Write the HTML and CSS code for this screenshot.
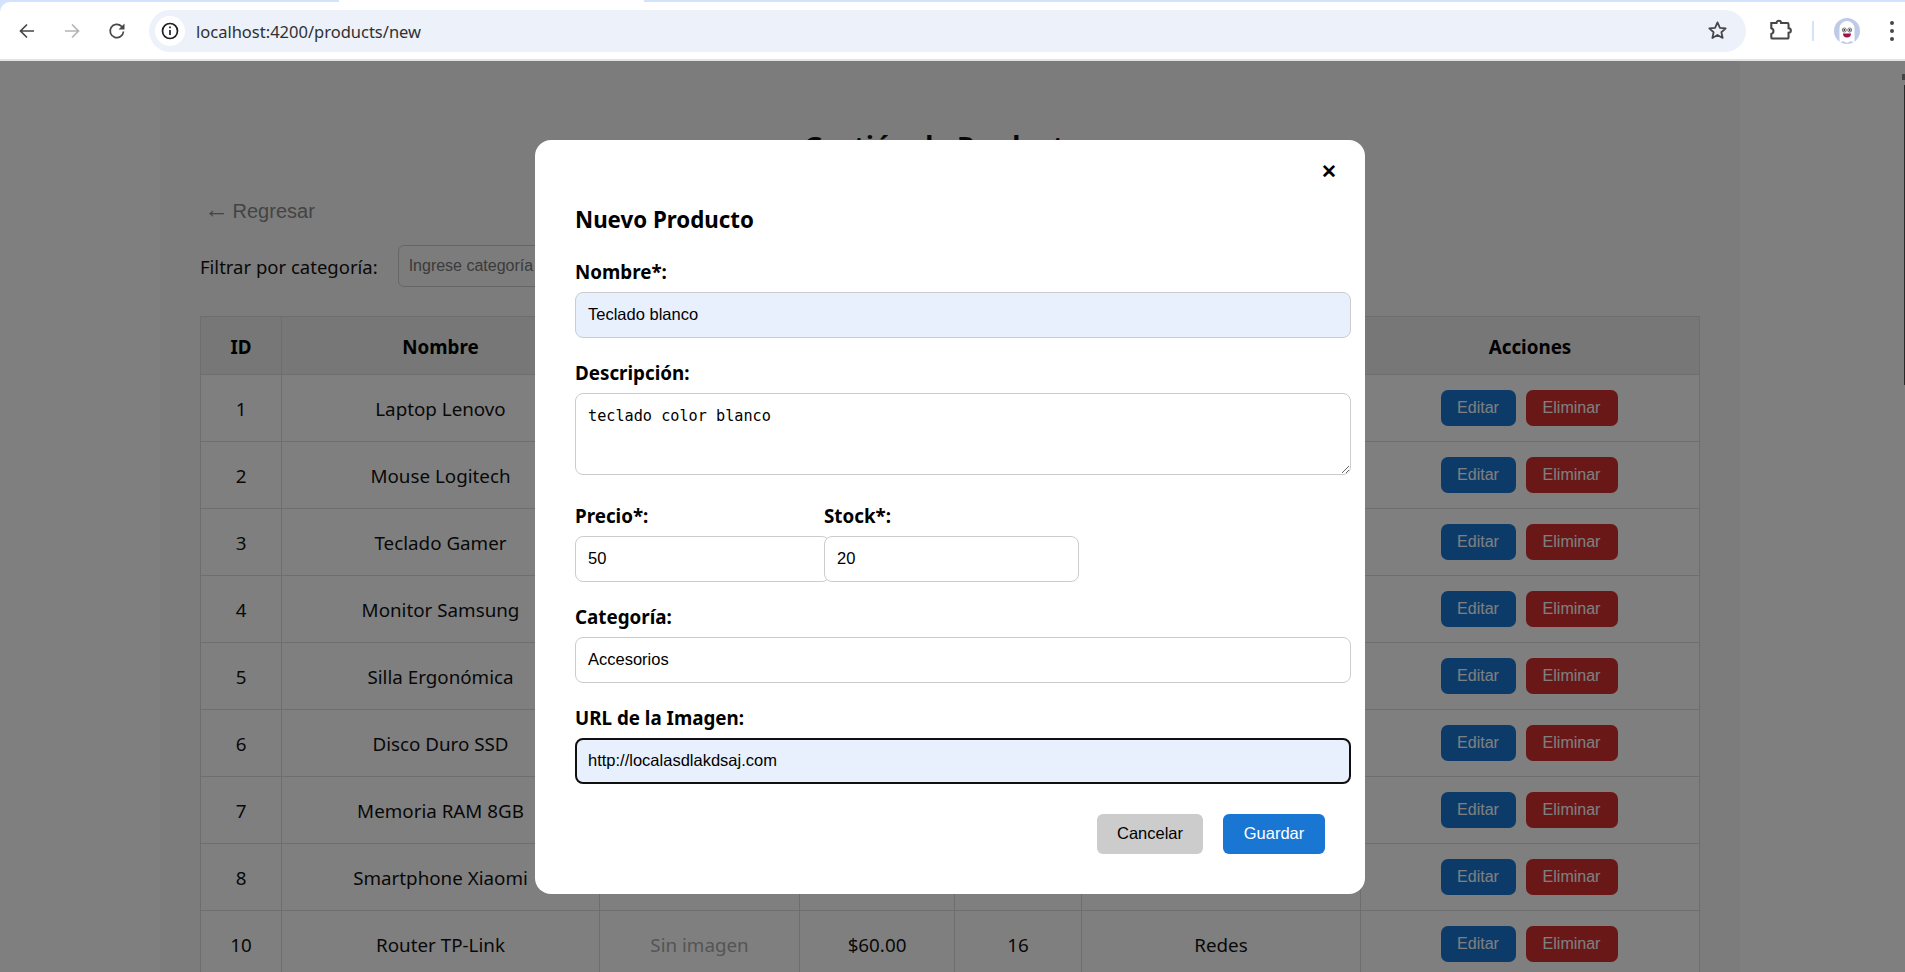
FILE: index.html
```html
<!DOCTYPE html>
<html lang="es">
<head>
    <meta charset="UTF-8">
    <meta name="viewport" content="width=device-width, initial-scale=1.0">
    <title>Nuevo Producto</title>
    <link rel="stylesheet" href="styles.css">
</head>
<body>

<header class="browser">
    <div class="tab-strip"><span class="tab-gap"></span></div>
    <div class="toolbar">
        <svg class="tool-icon back" viewBox="0 0 20 20"><path d="M17 10H4M10 3.500 3.500 10l6.500 6.500"/></svg>
        <svg class="tool-icon forward" viewBox="0 0 20 20"><path d="M3 10h13M10 3.500l6.500 6.500-6.500 6.500"/></svg>
        <svg class="tool-icon reload" viewBox="0 0 20 20"><path d="M16.500 10.500a6.700 6.700 0 1 1-1.900-5.200L16.500 7"/><path class="solid" d="M17.500 2.500v6h-6z"/></svg>
        <div class="address">
            <span class="site-info">
                <svg viewBox="0 0 20 20"><circle cx="10" cy="10" r="7.500"/><path d="M10 9v5"/><path d="M10 5.500v1.800"/></svg>
            </span>
            <span class="url">localhost:4200/products/new</span>
            <svg class="star" viewBox="0 0 20 20"><path d="M10 2.300l2.300 5.100 5.500.6-4.100 3.700 1.200 5.400L10 14.300l-4.900 2.800 1.200-5.400L2.200 8l5.500-.6z"/></svg>
        </div>
        <svg class="puzzle" viewBox="0 0 20 20"><path d="M2 3.500h4.500a2 2 0 0 1 4 0H16a1 1 0 0 1 1 1V8a2 2 0 0 1 0 4v4a1 1 0 0 1-1 1H3a1 1 0 0 1-1-1v-3a2.600 2.600 0 0 0 0-5z"/></svg>
        <span class="toolbar-sep"></span>
        <svg class="avatar" viewBox="0 0 26 26">
            <circle cx="13" cy="13" r="13" fill="#bfcbe6"/>
            <path d="M5.500 25V10.500a7.500 7.500 0 0 1 15 0V25l-3.500-2-4 2-4-2z" fill="#fff"/>
            <circle cx="10.300" cy="12" r="2" fill="#fff" stroke="#555" stroke-width=".8"/>
            <circle cx="15.700" cy="12" r="2" fill="#fff" stroke="#555" stroke-width=".8"/>
            <circle cx="10.300" cy="12" r=".9" fill="#333"/>
            <circle cx="15.700" cy="12" r=".9" fill="#333"/>
            <path d="M9 15.500h8a4 4 0 0 1-8 0z" fill="#a3124f"/>
        </svg>
        <span class="dots"><i></i><i></i><i></i></span>
    </div>
</header>

<div class="viewport">
    <main class="container">
        <h1>Gestión de Productos</h1>
        <a class="back-link" href="#"><span class="back-arrow">←</span> Regresar</a>
        <div class="filter">
            <label for="filterCategory">Filtrar por categoría:</label>
            <input type="text" id="filterCategory" placeholder="Ingrese categoría">
        </div>

        <table class="products">
            <colgroup>
                <col class="col-id"><col class="col-name"><col class="col-image"><col class="col-price">
                <col class="col-stock"><col class="col-category"><col class="col-actions">
            </colgroup>
            <thead>
                <tr><th>ID</th><th>Nombre</th><th>Imagen</th><th>Precio</th><th>Stock</th><th>Categoría</th><th>Acciones</th></tr>
            </thead>
            <tbody>
                <tr><td>1</td><td>Laptop Lenovo</td><td></td><td></td><td></td><td></td><td class="actions"><button class="btn-edit">Editar</button><button class="btn-delete">Eliminar</button></td></tr>
                <tr><td>2</td><td>Mouse Logitech</td><td></td><td></td><td></td><td></td><td class="actions"><button class="btn-edit">Editar</button><button class="btn-delete">Eliminar</button></td></tr>
                <tr><td>3</td><td>Teclado Gamer</td><td></td><td></td><td></td><td></td><td class="actions"><button class="btn-edit">Editar</button><button class="btn-delete">Eliminar</button></td></tr>
                <tr><td>4</td><td>Monitor Samsung</td><td></td><td></td><td></td><td></td><td class="actions"><button class="btn-edit">Editar</button><button class="btn-delete">Eliminar</button></td></tr>
                <tr><td>5</td><td>Silla Ergonómica</td><td></td><td></td><td></td><td></td><td class="actions"><button class="btn-edit">Editar</button><button class="btn-delete">Eliminar</button></td></tr>
                <tr><td>6</td><td>Disco Duro SSD</td><td></td><td></td><td></td><td></td><td class="actions"><button class="btn-edit">Editar</button><button class="btn-delete">Eliminar</button></td></tr>
                <tr><td>7</td><td>Memoria RAM 8GB</td><td></td><td></td><td></td><td></td><td class="actions"><button class="btn-edit">Editar</button><button class="btn-delete">Eliminar</button></td></tr>
                <tr><td>8</td><td>Smartphone Xiaomi</td><td></td><td></td><td></td><td></td><td class="actions"><button class="btn-edit">Editar</button><button class="btn-delete">Eliminar</button></td></tr>
                <tr><td>10</td><td>Router TP-Link</td><td class="no-image">Sin imagen</td><td>$60.00</td><td>16</td><td>Redes</td><td class="actions"><button class="btn-edit">Editar</button><button class="btn-delete">Eliminar</button></td></tr>
            </tbody>
        </table>
    </main>

    <div class="scrollbar"><span class="scroll-arrow"></span><span class="scroll-thumb"></span></div>

    <div class="overlay">
        <div class="modal">
            <button type="button" class="modal-close">✕</button>
            <h2>Nuevo Producto</h2>
            <form class="product-form">
                <div class="field">
                    <label for="name">Nombre*:</label>
                    <input type="text" id="name" class="autofilled" value="Teclado blanco">
                </div>
                <div class="field">
                    <label for="description">Descripción:</label>
                    <textarea id="description">teclado color blanco</textarea>
                </div>
                <div class="field-row">
                    <div class="field">
                        <label for="price">Precio*:</label>
                        <input type="text" id="price" value="50">
                    </div>
                    <div class="field">
                        <label for="stock">Stock*:</label>
                        <input type="text" id="stock" value="20">
                    </div>
                </div>
                <div class="field">
                    <label for="category">Categoría:</label>
                    <input type="text" id="category" value="Accesorios">
                </div>
                <div class="field">
                    <label for="imageUrl">URL de la Imagen:</label>
                    <input type="text" id="imageUrl" class="autofilled focused" value="http://localasdlakdsaj.com">
                </div>
                <div class="form-actions">
                    <button type="button" class="btn-cancel">Cancelar</button>
                    <button type="button" class="btn-save">Guardar</button>
                </div>
            </form>
        </div>
    </div>
</div>

</body>
</html>
```

FILE: styles.css
```css
* { box-sizing: border-box; }
html, body { height: 100%; }
body { margin: 0; display: flex; flex-direction: column; height: 100vh; overflow: hidden; background-color: #fff; font-family: "Noto Sans", sans-serif; color: #000; }

/* browser chrome */
.browser { flex: none; height: 61px; background-color: #d3e3fd; border-bottom: 2px solid #e3e3e3; }
.tab-strip { height: 2px; background-color: #d3e3fd; }
.tab-gap { display: block; width: 305px; height: 2px; margin-left: 339px; background-color: #fff; }
.toolbar { display: flex; align-items: center; height: 57px; padding: 0 0 0 17px; background-color: #fff; border-top-left-radius: 10px; }
.tool-icon { width: 20px; height: 20px; fill: none; stroke: #474747; stroke-width: 1.700; }
.tool-icon .solid { fill: #474747; stroke: none; }
.forward { margin-left: 25px; stroke: #b4b4b4; }
.reload { margin-left: 25px; }
.address { display: flex; align-items: center; width: 1597px; height: 42px; margin-left: 22px; padding: 0 18px 0 6px; border-radius: 21px; background-color: #ecf1fa; }
.site-info { display: flex; align-items: center; justify-content: center; width: 30px; height: 30px; border-radius: 50%; background-color: #fff; }
.site-info svg { width: 20px; height: 20px; fill: none; stroke: #1f1f1f; stroke-width: 1.700; }
.url { margin-left: 11px; padding-top: 1px; font-size: 16.500px; color: #303030; }
.star { width: 21px; height: 21px; margin-left: auto; fill: none; stroke: #474747; stroke-width: 1.700; stroke-linejoin: round; }
.puzzle { width: 23px; height: 23px; margin-left: 23px; fill: none; stroke: #474747; stroke-width: 1.800; }
.toolbar-sep { width: 2px; height: 20px; margin-left: 20px; background-color: #d3e3fd; }
.avatar { width: 26px; height: 26px; margin-left: 20px; }
.dots { display: flex; flex-direction: column; gap: 4px; margin-left: 30px; }
.dots i { width: 4px; height: 4px; border-radius: 50%; background-color: #474747; }

/* page behind the dialog */
.viewport { position: relative; flex: 1; display: flex; justify-content: center; overflow: hidden; padding-right: 5px; }
.container { width: 1580px; height: 1000px; padding: 65px 41px 0 40px; background-color: #f9f9f9; }
.container h1 { margin: 0 0 33px; font-size: 27.500px; line-height: 40px; font-weight: 700; text-align: center; color: #111; }
.back-link { display: block; margin-left: 4px; font-family: "Liberation Sans", Arial, sans-serif; font-size: 20px; line-height: 24px; color: #888; text-decoration: none; }
.back-arrow { font-size: 25px; line-height: 20px; letter-spacing: -2px; }
.filter { display: flex; align-items: center; gap: 20px; margin-top: 22px; }
.filter label { font-size: 18.500px; color: #111; }
.filter input { width: 400px; height: 42px; padding: 0 10px; border: 1px solid #ccc; border-radius: 6px; font-family: "Liberation Sans", Arial, sans-serif; font-size: 16px; background-color: transparent; }
.filter input::placeholder { color: #777; }

.products { width: 1499px; margin-top: 29px; border-collapse: collapse; table-layout: fixed; background-color: #fff; }
.col-id { width: 81px; }
.col-name { width: 318px; }
.col-image { width: 200px; }
.col-price { width: 155px; }
.col-stock { width: 127px; }
.col-category { width: 279px; }
.col-actions { width: 339px; }
.products th, .products td { border: 1px solid #ddd; padding: 2px 0 0; text-align: center; font-size: 18.800px; color: #111; }
.products th { height: 58px; background-color: #eee; font-weight: 700; color: #000; }
.products td { height: 67px; }
.products .actions { padding: 0 2px 0 0; }
.products .no-image { color: #aaa; }
.products button { height: 36px; border: none; border-radius: 7px; color: #fff; font-family: "Liberation Sans", Arial, sans-serif; font-size: 16px; }
.btn-edit { width: 75px; margin-right: 10px; background-color: #1976d2; }
.btn-delete { width: 92px; background-color: #d32f2f; }

.scrollbar { position: absolute; top: 0; right: 0; bottom: 0; width: 5px; background-color: #fff; }
.scroll-arrow { position: absolute; top: 13px; right: 0; width: 3px; height: 6px; background-color: #888; }
.scroll-thumb { position: absolute; top: 24px; right: 0; width: 1px; height: 300px; background-color: #555; }

/* dialog */
.overlay { position: absolute; inset: 0; display: flex; align-items: center; justify-content: center; padding-right: 5px; background-color: rgba(0, 0, 0, 0.5); }
.modal { position: relative; width: 830px; height: 754px; padding: 60px 40px 0; background-color: #fff; border-radius: 16px; }
.modal-close { position: absolute; top: 20px; right: 26px; width: 20px; height: 24px; padding: 0; border: none; background: none; font-size: 19px; font-weight: 700; line-height: 24px; color: #000; }
.modal h2 { margin: 0 0 21px; font-size: 22.300px; line-height: 40px; font-weight: 700; }
.product-form { display: flex; flex-direction: column; gap: 24px; }
.field { display: flex; flex-direction: column; gap: 9px; }
.field label { font-size: 18.800px; line-height: 22px; font-weight: 700; }
.field input, .field textarea { width: 776px; height: 46px; padding: 0 12px; border: 1px solid #ccc; border-radius: 8px; background-color: #fff; font-family: "Liberation Sans", Arial, sans-serif; font-size: 16.500px; color: #000; }
.field textarea { display: block; height: 82px; padding-top: 13px; font-family: "DejaVu Sans Mono", monospace; font-size: 15.200px; resize: vertical; }
.field-row { display: flex; margin-top: 6px; }
.field-row .field { width: 249px; }
.field-row input { position: relative; width: 255px; }
.autofilled { background-color: #e8f0fe !important; }
.focused { border: 2px solid #101010 !important; padding: 0 11px !important; }
.form-actions { display: flex; justify-content: flex-end; gap: 20px; margin-top: 6px; }
.form-actions button { height: 40px; border: none; border-radius: 6px; font-family: "Liberation Sans", Arial, sans-serif; font-size: 16.500px; }
.btn-cancel { width: 106px; background-color: #ccc; color: #000; }
.btn-save { width: 102px; background-color: #1976d2; color: #fff; }
```
